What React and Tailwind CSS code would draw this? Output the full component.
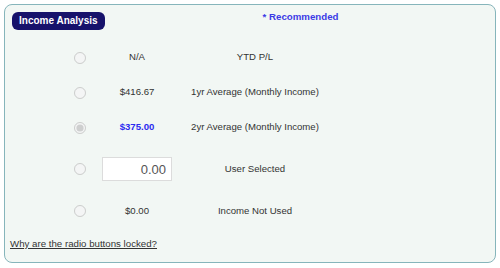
import React from "react";

const rows = [
  { value: "N/A", label: "YTD P/L", h: "h-[35px]" },
  { value: "$416.67", label: "1yr Average (Monthly Income)", h: "h-[35px]" },
  { value: "$375.00", label: "2yr Average (Monthly Income)", h: "h-[35px]", checked: true },
  { input: "0.00", label: "User Selected", h: "h-[48px]" },
  { value: "$0.00", label: "Income Not Used", h: "h-[36px]" },
];

export default function App() {
  return (
    <div className="h-[268px] w-[500px] bg-white p-[4px] font-['Liberation_Sans',Arial,sans-serif]">
      <div className="flex h-[259px] w-[492px] flex-col rounded-[8px] border border-[#86b5bb] bg-[#f2f7f4] px-[7px] pt-[7px]">
        {/* Header */}
        <div className="flex items-start">
          <span className="flex h-[18px] items-center rounded-[6px] bg-[#17126b] px-[7px] text-[10px] font-bold leading-none text-white">
            Income Analysis
          </span>
          <span className="ml-[158px] -mt-[2px] text-[9.7px] font-bold text-[#3b3be6]">
            * Recommended
          </span>
        </div>

        {/* Options */}
        <div className="mt-[10px] flex flex-col">
          {rows.map((r, i) => (
            <div key={i} className={`flex items-center ${r.h}`}>
              <div className="ml-[61px] flex w-[14px] justify-center">
                <input
                  type="radio"
                  name="income"
                  disabled
                  defaultChecked={!!r.checked}
                  className="m-0 h-[12px] w-[12px]"
                />
              </div>
              <div className="ml-[12px] flex w-[76px] justify-center">
                {r.input ? (
                  <input
                    type="text"
                    readOnly
                    value={r.input}
                    className="h-[24px] w-[70px] border border-[#dcdcdc] bg-white px-[5px] text-right text-[13px] text-[#555]"
                  />
                ) : (
                  <span
                    className={
                      r.checked
                        ? "text-[9.6px] font-bold text-[#2b2bf0]"
                        : "text-[9.6px] text-[#333]"
                    }
                  >
                    {r.value}
                  </span>
                )}
              </div>
              <div className="flex w-[160px] justify-center text-[9.6px] text-[#333]">
                {r.label}
              </div>
            </div>
          ))}
        </div>

        <a href="#" className="-ml-[2px] mt-[8px] self-start text-[9.7px] text-[#333] underline">
          Why are the radio buttons locked?
        </a>
      </div>
    </div>
  );
}
